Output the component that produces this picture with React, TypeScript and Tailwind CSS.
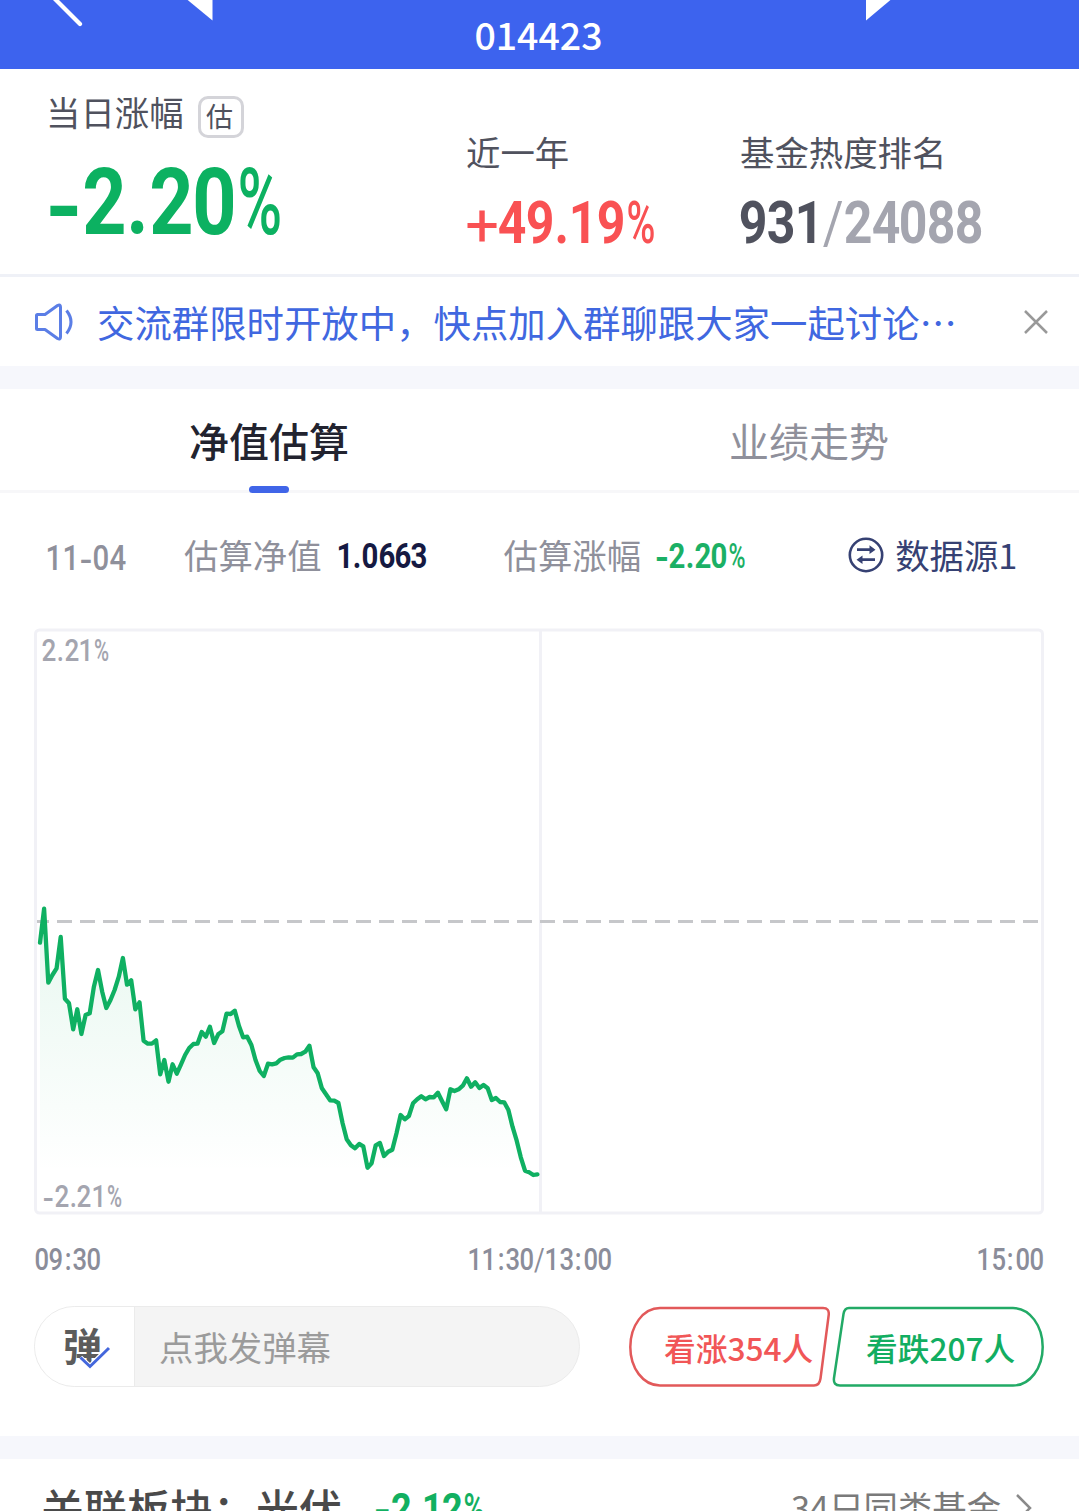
interface NumProps {
  value: string;
  className?: string;
}

// Cell and glyph widths that turn Roboto into condensed DIN-like figures
const CELLS: { [key: string]: string } = {
  "-": "w-[0.4em]",
  "+": "w-[0.54em]",
  ".": "w-[0.255em]",
  ":": "w-[0.32em]",
  "/": "w-[0.35em]",
  "%": "w-[0.52em]",
};

const GLYPHS: { [key: string]: string } = {
  "-": "scale-x-[1.05] translate-y-[0.055em]",
  "+": "scale-x-[1] translate-y-[0.05em] font-normal",
  "/": "scale-x-[0.85] font-normal",
  "%": "scale-x-[0.66] font-medium",
};

const Num = ({ value, className = "" }: NumProps) => (
  <span
    className={`inline-block whitespace-nowrap font-[Roboto,sans-serif] ${className}`}
  >
    {value.split("").map((char, i) => (
      <span
        key={i}
        className={`inline-flex justify-center ${CELLS[char] ?? "w-[0.47em]"}`}
      >
        <span className={`inline-block ${GLYPHS[char] ?? "scale-x-[0.84]"}`}>
          {char}
        </span>
      </span>
    ))}
  </span>
);

// One value per minute of the morning session, in plot pixels from the top of the frame
const PRICES = [
  314.7, 280.7, 354.7, 347, 340.3, 309, 370.7, 375.3, 401.3, 381.3, 406, 387,
  385.3, 358.7, 342, 363.7, 380, 372, 362, 348.7, 330, 356.7, 352.3, 381.3,
  374.3, 412.7, 415.7, 415.7, 412.3, 446.3, 432, 453.7, 436.3, 445.7, 436.7,
  427, 420, 416, 415.7, 404, 408.7, 398.7, 415, 406.3, 403.3, 385.7, 386,
  382.7, 398, 409.3, 408.7, 417, 432, 443, 448, 435.7, 436.3, 435.3, 431.7,
  430, 429.3, 429.7, 426.3, 426, 423.7, 417.7, 439.3, 445.3, 460.3, 466.3,
  472.3, 472.7, 475, 495.3, 511.3, 517.3, 520.3, 516, 518.3, 539.7, 535.3,
  517.3, 515, 528, 523.7, 521.7, 505.3, 487, 491.3, 488, 475.3, 471.3, 468.3,
  471.3, 469, 469.3, 464.7, 473.3, 481.3, 461.3, 463, 461.3, 457.7, 450.3,
  458.7, 454.3, 460, 457, 460.3, 472, 470, 474, 474.3, 482, 498.7, 512.7,
  529.3, 542.7, 544.3, 547, 546.3,
];
const STEP = 4.145;

const Header = () => (
  <header className="relative flex h-[69px] justify-center bg-[#3d63ee]">
    <svg
      className="absolute inset-0"
      width="1079"
      height="69"
      viewBox="0 0 1079 69"
      fill="none"
    >
      <path
        d="M52 -4L80 24"
        stroke="#fff"
        strokeWidth="4.200"
        strokeLinecap="round"
      />
      <path d="M212.500 -25V20.500L184 -3Z" fill="#fff" />
      <path d="M866 -25V20.500L894 -3Z" fill="#fff" />
    </svg>
    <h1 className="relative pr-[2px] text-[37.5px] leading-[67px] font-medium text-white">
      014423
    </h1>
  </header>
);

const Summary = () => (
  <section className="flex h-[208px] border-b-[3px] border-[#eff1f7] pl-[46px] text-[34.4px] leading-[40px] text-[#50525e]">
    <div className="w-[420px] pt-[22px]">
      <div className="flex">
        <span>当日涨幅</span>
        <span className="mt-[5px] ml-[14px] flex h-[42px] w-[46px] items-center justify-center rounded-[10px] border-[3px] border-[#d4d4d9] pr-[2px] pb-[2px] text-[27px]">
          估
        </span>
      </div>
      <Num
        value="-2.20%"
        className="mt-[18px] text-[92px] leading-[94px] font-bold text-[#0cb161]"
      />
    </div>
    <div className="w-[274px] pt-[62px]">
      <div>近一年</div>
      <Num
        value="+49.19%"
        className="mt-[22px] text-[59.5px] leading-[60px] font-bold text-[#f95153]"
      />
    </div>
    <div className="pt-[62px]">
      <div>基金热度排名</div>
      <div className="mt-[22px] -ml-px flex text-[59.5px] leading-[60px] font-bold">
        <Num value="931" />
        <Num value="/24088" className="text-[#a4a5af]" />
      </div>
    </div>
  </section>
);

const Notice = () => (
  <section className="flex h-[89px] items-center pl-[34px] text-[#4067e0]">
    <svg width="40" height="40" viewBox="0 0 40 40" fill="none">
      <path
        d="M11 12.500H3.500Q2.500 12.500 2.500 13.500V26.500Q2.500 27.500 3.500 27.500H11L23.500 36.500Q26.500 38 26.500 35V5Q26.500 2 23.500 3.500Z"
        stroke="#5b7ee6"
        strokeWidth="3"
        strokeLinejoin="round"
      />
      <path
        d="M32.500 8.500Q41.500 20 32.500 31.500"
        stroke="#5b7ee6"
        strokeWidth="3"
      />
    </svg>
    <p className="ml-[23px] w-[901px] text-[37.4px] leading-[50px] whitespace-nowrap">
      交流群限时开放中，快点加入群聊跟大家一起讨论…
    </p>
    <svg
      className="ml-[26px]"
      width="24"
      height="24"
      viewBox="0 0 24 24"
      fill="none"
      stroke="#999"
      strokeWidth="2.500"
    >
      <path d="M1 1L23 23M23 1L1 23" />
    </svg>
  </section>
);

const Tabs = () => (
  <nav className="flex h-[104px] border-b-[3px] border-[#f7f7f9] text-center text-[40px] leading-[102px]">
    <div className="relative w-[538px] font-medium text-[#22232f]">
      净值估算
      <span className="absolute top-[97px] left-1/2 h-[7px] w-[40px] -translate-x-1/2 rounded-full bg-[#4065e8]" />
    </div>
    <div className="flex-1 pl-px text-[#8f909b]">业绩走势</div>
  </nav>
);

const Estimate = () => (
  <section className="flex h-[135px] pt-[36px] pl-[46px] text-[34.4px] leading-[50px] text-[#8f909b]">
    <Num
      value="11-04"
      className="w-[138px] pt-[5px] text-[35px] font-medium"
    />
    <span>估算净值</span>
    <Num
      value="1.0663"
      className="ml-[15px] w-[167px] pt-[3px] text-[35px] font-bold text-[#151942]"
    />
    <span>估算涨幅</span>
    <Num
      value="-2.20%"
      className="ml-[14px] w-[193px] pt-[3px] text-[35px] font-bold text-[#1bb065]"
    />
    <svg
      className="mt-[8px] mr-[11px]"
      width="36"
      height="36"
      viewBox="0 0 36 36"
      fill="none"
      stroke="#364173"
      strokeWidth="2.600"
    >
      <circle cx="18" cy="18" r="16.200" />
      <path d="M9 12.700H24M12 22.700H27" strokeWidth="2.800" />
      <path
        d="M21.500 8.200L27.500 12.700L21.500 17ZM14.500 18.400L8.500 22.700L14.500 27Z"
        fill="#364173"
        stroke="none"
      />
    </svg>
    <span className="text-[#364173]">数据源1</span>
  </section>
);

const Chart = () => {
  const points = PRICES.map((y, i) => `${(6 + i * STEP).toFixed(1)},${y}`);
  const lastX = 6 + (PRICES.length - 1) * STEP;

  return (
    <section className="px-[34px]">
      <div className="relative h-[587px]">
        <svg width="1010" height="587" viewBox="0 0 1010 587" fill="none">
          <defs>
            <linearGradient
              id="fade"
              gradientUnits="userSpaceOnUse"
              x1="0"
              y1="280"
              x2="0"
              y2="545"
            >
              <stop offset="0" stopColor="#0fb062" stopOpacity="0.100" />
              <stop offset="1" stopColor="#0fb062" stopOpacity="0" />
            </linearGradient>
          </defs>
          <rect
            x="1.500"
            y="2"
            width="1007"
            height="583"
            rx="4"
            stroke="#f1f1f6"
            strokeWidth="3"
          />
          <path d="M506.500 2V585" stroke="#f1f1f6" strokeWidth="3" />
          <path
            d="M3 293.500H1005"
            stroke="#c6c7ca"
            strokeWidth="3"
            strokeDasharray="15 8"
            strokeDashoffset="3"
          />
          <polygon
            points={`6,546 ${points.join(" ")} ${lastX},546`}
            fill="url(#fade)"
          />
          <polyline
            points={points.join(" ")}
            stroke="#0fb062"
            strokeWidth="4.300"
            strokeLinejoin="round"
            strokeLinecap="round"
          />
        </svg>
        <Num
          value="2.21%"
          className="absolute top-[7px] left-[8px] text-[31px] leading-[32px] font-medium text-[#a4a5af]"
        />
        <Num
          value="-2.21%"
          className="absolute top-[553px] left-[8px] text-[31px] leading-[32px] font-medium text-[#a4a5af]"
        />
      </div>
      <div className="mt-[29px] grid grid-cols-3 text-[30.5px] leading-[32px] font-medium text-[#8b8d9a]">
        <Num value="09:30" />
        <Num value="11:30/13:00" className="text-center" />
        <Num value="15:00" className="pr-px text-right" />
      </div>
    </section>
  );
};

const Actions = () => (
  <section className="mt-[30px] flex h-[81px] px-[34px]">
    <div className="flex w-[546px] overflow-hidden rounded-full border border-[#ebebeb] bg-[#f4f4f4]">
      <div className="relative w-[100px] border-r border-[#ebebeb] bg-white pl-[28px] text-[39px] leading-[74px] font-bold text-[#5c5c5c]">
        弹
        <svg
          className="absolute top-[39px] left-[43px]"
          width="34"
          height="26"
          viewBox="0 0 34 26"
          fill="none"
        >
          <path d="M2 12L12 21L31 2" stroke="#fff" strokeWidth="6" />
          <path
            d="M2.500 11.500L12 20.500L31 2"
            stroke="#4467dc"
            strokeWidth="3"
          />
        </svg>
      </div>
      <span className="pl-[24px] text-[34.4px] leading-[78px] text-[#9b9b9b]">
        点我发弹幕
      </span>
    </div>
    <button className="relative ml-[49px] h-[81px] w-[201px] pl-[35px] text-left text-[31.7px] leading-[80px] font-medium whitespace-nowrap text-[#f15657]">
      <svg
        className="absolute inset-0"
        width="201"
        height="81"
        viewBox="0 0 201 81"
        fill="none"
      >
        <path
          d="M31 2H194Q200.500 2 199.700 9L191.500 72.500Q190.500 79.500 185 79.500H31C14 79.500 1.300 62 1.300 41C1.300 20 14 2 31 2Z"
          stroke="#e2595a"
          strokeWidth="2.500"
        />
      </svg>
      看涨354人
    </button>
    <button className="relative ml-[2px] h-[81px] w-[212px] pl-[34px] text-left text-[31.7px] leading-[80px] font-medium whitespace-nowrap text-[#12ae61]">
      <svg
        className="absolute inset-0"
        width="212"
        height="81"
        viewBox="0 0 212 81"
        fill="none"
      >
        <path
          d="M181 2H17Q12.500 2 11.500 8L2 72Q1 79.500 8 79.500H181C198 79.500 210.700 62 210.700 41C210.700 20 198 2 181 2Z"
          stroke="#22aa66"
          strokeWidth="2.500"
        />
      </svg>
      看跌207人
    </button>
  </section>
);

const Related = () => (
  <section className="flex h-[52px] pl-[41px] leading-[60px]">
    <span className="mt-[18px] w-[333px] text-[43px] font-medium whitespace-nowrap text-[#4a4a4a]">
      关联板块：光伏
    </span>
    <Num
      value="-2.12%"
      className="mt-[19px] w-[417px] text-[43px] font-bold text-[#12b061]"
    />
    <span className="mt-[17px] w-[225px] text-[34.4px] whitespace-nowrap text-[#7a7a7a]">
      34只同类基金
    </span>
    <svg
      className="mt-[34px]"
      width="16"
      height="30"
      viewBox="0 0 16 30"
      fill="none"
    >
      <path d="M1 2L14 15L1 28" stroke="#8a8a8a" strokeWidth="2.500" />
    </svg>
  </section>
);

const App = () => {
  return (
    <main className="h-[1511px] w-[1079px] overflow-hidden bg-white font-['Noto_Sans_CJK_SC',sans-serif]">
      <Header />
      <Summary />
      <Notice />
      <div className="h-[23px] bg-[#f6f7fc]" />
      <Tabs />
      <Estimate />
      <Chart />
      <Actions />
      <div className="mt-[49px] h-[23px] bg-[#f6f7fc]" />
      <Related />
    </main>
  );
};

export default App;
